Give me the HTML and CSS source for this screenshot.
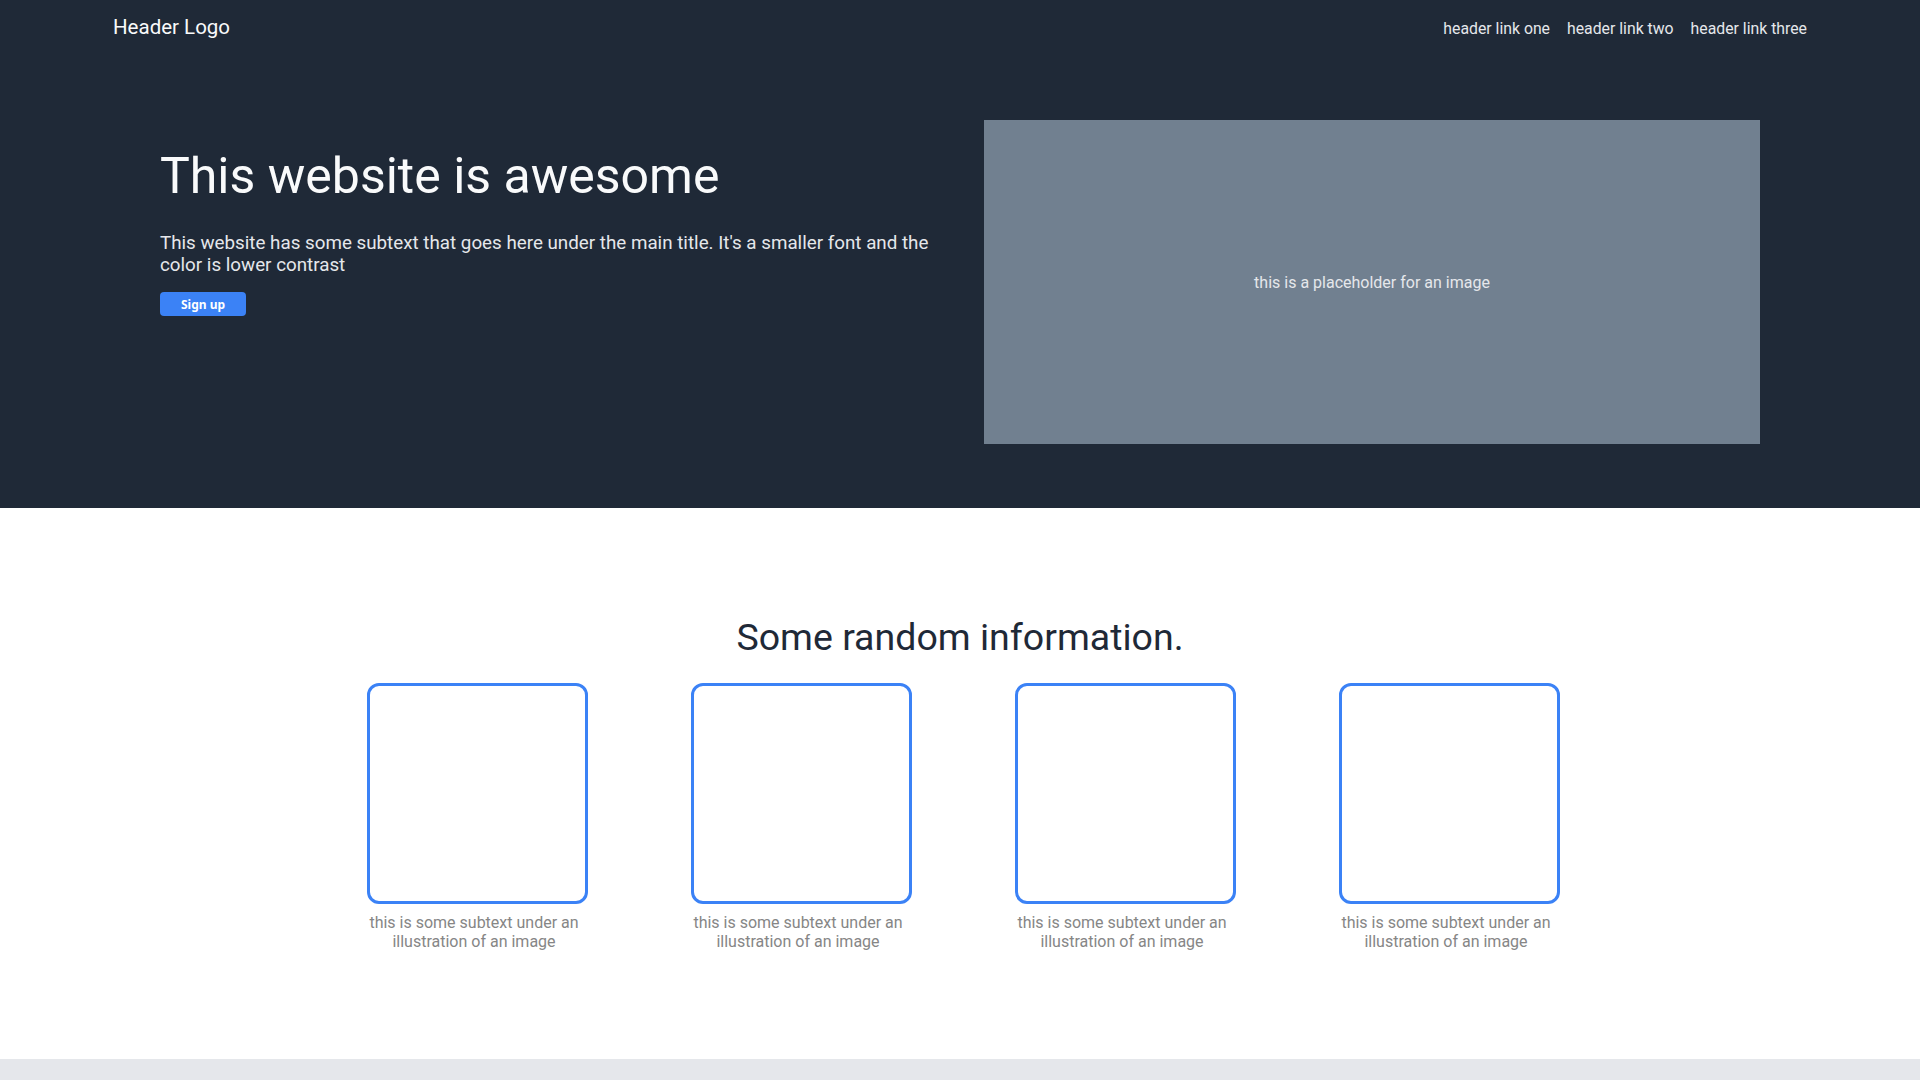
FILE: index.html
```html
<!DOCTYPE html>
<html lang="en">
<head>
<meta charset="utf-8">
<title>Landing page</title>
<link rel="stylesheet" href="styles.css">
</head>
<body>
<div class="top">
  <header class="header">
    <div class="logo">Header Logo</div>
    <nav class="nav">
      <a href="#">header link one</a>
      <a href="#">header link two</a>
      <a href="#">header link three</a>
    </nav>
  </header>
  <section class="hero">
    <div class="hero-text">
      <h1 class="hero-title">This website is awesome</h1>
      <p class="hero-sub">This website has some subtext that goes here under the main title. It's a smaller font and the color is lower contrast</p>
      <button class="btn">Sign up</button>
    </div>
    <div class="hero-image">this is a placeholder for an image</div>
  </section>
</div>
<section class="info">
  <h2 class="info-title">Some random information.</h2>
  <div class="cards">
    <div class="card">
      <div class="card-img"></div>
      <p class="card-text">this is some subtext under an illustration of an image</p>
    </div>
    <div class="card">
      <div class="card-img"></div>
      <p class="card-text">this is some subtext under an illustration of an image</p>
    </div>
    <div class="card">
      <div class="card-img"></div>
      <p class="card-text">this is some subtext under an illustration of an image</p>
    </div>
    <div class="card">
      <div class="card-img"></div>
      <p class="card-text">this is some subtext under an illustration of an image</p>
    </div>
  </div>
</section>
<footer class="footer"></footer>
</body>
</html>
```
FILE: styles.css
```css
* { box-sizing: border-box; }
html, body { margin: 0; padding: 0; }
body {
  font-family: Roboto, "Liberation Sans", Arial, sans-serif;
  background: #ffffff;
}
.top { background: #1f2937; }
.header {
  height: 54px;
  padding: 0 113px;
  display: flex;
  align-items: center;
  justify-content: space-between;
}
.logo {
  color: #f9fafb;
  font-size: 20.5px;
}
.nav { display: flex; gap: 17px; padding-top: 2px; }
.nav a {
  color: #e5e7eb;
  text-decoration: none;
  font-size: 15.8px;
}
.hero {
  display: flex;
  gap: 24px;
  padding: 66px 160px 64px;
}
.hero-text {
  width: 800px;
  flex: none;
  padding-top: 27px;
}
.hero-title {
  margin: 0;
  color: #f9fafb;
  font-size: 50px;
  font-weight: 400;
  line-height: 58px;
}
.hero-sub {
  margin: 27px 0 0;
  color: #e5e7eb;
  font-size: 18.8px;
  line-height: 22px;
}
.btn {
  margin-top: 16px;
  width: 86px;
  height: 24px;
  border: none;
  border-radius: 4px;
  background: #3b82f6;
  color: #ffffff;
  font-family: "Noto Sans", "Open Sans", sans-serif;
  font-weight: 700;
  font-size: 12px;
  padding: 0;
}
.hero-image {
  flex: 1;
  height: 324px;
  background: #718090;
  color: #e5e7eb;
  font-size: 16px;
  display: flex;
  align-items: center;
  justify-content: center;
}
.info {
  padding: 108px 0 108px;
}
.info-title {
  margin: 0;
  text-align: center;
  color: #1f2937;
  font-size: 37.5px;
  font-weight: 400;
  line-height: 42px;
}
.cards {
  margin-top: 25px;
  display: flex;
  justify-content: center;
  gap: 109px;
}
.card { width: 215px; }
.card-img {
  width: 221px;
  height: 221px;
  border: 3px solid #3b82f6;
  border-radius: 12px;
}
.card-text {
  margin: 9px 0 0;
  text-align: center;
  color: #868686;
  font-size: 16px;
  line-height: 19px;
}
.footer {
  height: 21px;
  background: #e5e7eb;
}
```
